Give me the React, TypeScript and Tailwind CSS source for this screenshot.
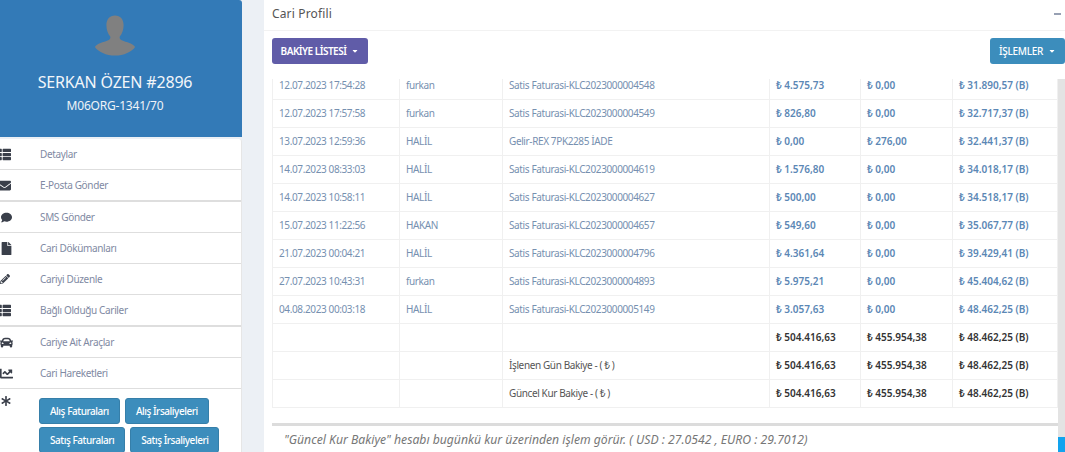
import { FaThList, FaEnvelope, FaComment, FaFile, FaPencilAlt, FaCar, FaChartLine, FaAsterisk, FaCaretDown } from 'react-icons/fa';
import type { ReactNode } from 'react';

const menu: { icon: ReactNode; label: string; thick?: boolean }[] = [
  { icon: <FaThList size={13} className="-ml-[2px]" />, label: 'Detaylar' },
  { icon: <FaEnvelope size={13} className="-ml-[2px]" />, label: 'E-Posta Gönder', thick: true },
  { icon: <FaComment size={11} className="ml-[1px]" />, label: 'SMS Gönder' },
  { icon: <FaFile size={13} />, label: 'Cari Dökümanları' },
  { icon: <FaPencilAlt size={10} />, label: 'Cariyi Düzenle' },
  { icon: <FaThList size={13} className="-ml-[2px]" />, label: 'Bağlı Olduğu Cariler', thick: true },
  { icon: <FaCar size={13} />, label: 'Cariye Ait Araçlar' },
  { icon: <FaChartLine size={13} />, label: 'Cari Hareketleri' },
];

const rows = [
  ['12.07.2023 17:54:28', 'furkan', 'Satis Faturasi-KLC2023000004548', '₺ 4.575,73', '₺ 0,00', '₺ 31.890,57 (B)'],
  ['12.07.2023 17:57:58', 'furkan', 'Satis Faturasi-KLC2023000004549', '₺ 826,80', '₺ 0,00', '₺ 32.717,37 (B)'],
  ['13.07.2023 12:59:36', 'HALİL', 'Gelir-REX 7PK2285 İADE', '₺ 0,00', '₺ 276,00', '₺ 32.441,37 (B)'],
  ['14.07.2023 08:33:03', 'HALİL', 'Satis Faturasi-KLC2023000004619', '₺ 1.576,80', '₺ 0,00', '₺ 34.018,17 (B)'],
  ['14.07.2023 10:58:11', 'HALİL', 'Satis Faturasi-KLC2023000004627', '₺ 500,00', '₺ 0,00', '₺ 34.518,17 (B)'],
  ['15.07.2023 11:22:56', 'HAKAN', 'Satis Faturasi-KLC2023000004657', '₺ 549,60', '₺ 0,00', '₺ 35.067,77 (B)'],
  ['21.07.2023 00:04:21', 'HALİL', 'Satis Faturasi-KLC2023000004796', '₺ 4.361,64', '₺ 0,00', '₺ 39.429,41 (B)'],
  ['27.07.2023 10:43:31', 'furkan', 'Satis Faturasi-KLC2023000004893', '₺ 5.975,21', '₺ 0,00', '₺ 45.404,62 (B)'],
  ['04.08.2023 00:03:18', 'HALİL', 'Satis Faturasi-KLC2023000005149', '₺ 3.057,63', '₺ 0,00', '₺ 48.462,25 (B)'],
];

const totals = ['', 'İşlenen Gün Bakiye - ( ₺ )', 'Güncel Kur Bakiye - ( ₺ )'];

const td = 'h-7 border border-[#f0f0f0] px-[6px] py-0 align-middle';
const plain = `${td} tracking-[-0.38px]`;

function Btn({ children }: { children: ReactNode }) {
  return (
    <button className="h-[26px] rounded-[3px] bg-[#3c8dbc] border border-[#367fa9] px-[10px] text-[10px] font-medium tracking-[-0.45px] text-white whitespace-nowrap">
      {children}
    </button>
  );
}

export default function App() {
  return (
    <div className="flex h-[452px] w-[1065px] overflow-hidden bg-[#ecf0f5] font-['Noto_Sans','Open_Sans',sans-serif]">
      {/* Profile column */}
      <div className="w-[242px] shrink-0">
        <div className="h-[137px] bg-[#337ab7] rounded-tr-[3px] flex flex-col items-center pr-[12px] text-white">
          <svg viewBox="0 0 44 44" className="w-[42px] h-[43px] mt-[14px] text-[#808080]" fill="currentColor">
            <path d="M22 1c5.500 0 9 4 9 10 0 5-1.500 9-4 12-.500 1.500 0 3 2 4 5 2 12 3.500 14 7-3 5-12 9-21 9S4 39 1 34c2-3.500 9-5 14-7 2-1 2.500-2.500 2-4-2.500-3-4-7-4-12 0-6 3.500-10 9-10z" />
          </svg>
          <div className="mt-[13px] text-[16px] leading-[24px] tracking-[-0.18px] text-[#f2f6fa]">SERKAN ÖZEN #2896</div>
          <div className="text-[12px] leading-[24px] tracking-[-0.2px] text-[#eef3f8]">M06ORG-1341/70</div>
        </div>
        <div className="mt-[2px] bg-white rounded-tr-[3px] h-[313px] border-r border-[#e6e6e6]">
          {menu.map((m) => (
            <div
              key={m.label}
              className={`flex items-center text-[#3a3f4a] border-[#dedede] ${m.thick ? 'h-[32px] border-b-2' : 'h-[31px] border-b'}`}
            >
              <span className="w-[40px] shrink-0 flex items-center">{m.icon}</span>
              <span className="text-[10px] tracking-[-0.35px] text-[#7f8aa3]">{m.label}</span>
            </div>
          ))}
          <div className="flex pt-[9px]">
            <span className="w-[39px] shrink-0 pl-[1px] -mt-[2px] text-[#3a3f4a]">
              <FaAsterisk size={10} />
            </span>
            <div className="flex flex-col gap-[3px]">
              <div className="flex gap-[5px]">
                <Btn>Alış Faturaları</Btn>
                <Btn>Alış İrsaliyeleri</Btn>
              </div>
              <div className="flex gap-[5px]">
                <Btn>Satış Faturaları</Btn>
                <Btn>Satış İrsaliyeleri</Btn>
              </div>
            </div>
          </div>
        </div>
      </div>

      {/* Main panel */}
      <div className="ml-[22px] flex-1 min-w-0 bg-white flex flex-col">
        <div className="h-[31px] shrink-0 border-b border-[#f2f2f2] flex items-center justify-between pl-[8px] pb-[2px]">
          <span className="text-[12px] text-[#555] tracking-[0.15px]">Cari Profili</span>
          <span className="w-[7px] h-[2px] bg-[#97a0b3] mr-[4px]"></span>
        </div>
        <div className="h-[48px] shrink-0 flex items-start justify-between pl-[8px] pt-[7px]">
          <button className="h-[26px] w-[96px] rounded-[3px] bg-[#605ca8] text-white text-[10px] font-semibold tracking-[-0.5px] flex items-center justify-center gap-[5px]">
            BAKİYE LİSTESİ <FaCaretDown size={8} />
          </button>
          <button className="h-[26px] w-[75px] rounded-[3px] bg-[#3c8dbc] text-white text-[10px] font-medium tracking-[-0.3px] flex items-center justify-center gap-[5px]">
            İŞLEMLER <FaCaretDown size={8} />
          </button>
        </div>
        <div className="flex flex-1 min-h-0">
          <div className="flex-1 min-w-0 flex flex-col overflow-hidden pl-[8px]">
            <div className="h-[347px] shrink-0 overflow-hidden border-b-[3px] border-[#dcdcdc]">
              <table className="-mt-[8px] w-[785px] table-fixed border-collapse text-[10px]">
                <colgroup>
                  <col className="w-[127px]" />
                  <col className="w-[103px]" />
                  <col className="w-[267px]" />
                  <col className="w-[91px]" />
                  <col className="w-[92px]" />
                  <col className="w-[105px]" />
                </colgroup>
                <tbody>
                  {rows.map((r) => (
                    <tr key={r[0]} className="text-[#7690b0]">
                      <td className={plain}>{r[0]}</td>
                      <td className={plain}>{r[1]}</td>
                      <td className={plain}>{r[2]}</td>
                      <td className={`${td} font-semibold text-[#5b87b5]`}>{r[3]}</td>
                      <td className={`${td} font-semibold text-[#5b87b5]`}>{r[4]}</td>
                      <td className={`${td} font-semibold text-[#5b87b5]`}>{r[5]}</td>
                    </tr>
                  ))}
                  {totals.map((t) => (
                    <tr key={t} className="text-[#555]">
                      <td className={td}></td>
                      <td className={td}></td>
                      <td className={plain}>{t}</td>
                      <td className={`${td} font-semibold text-[#333]`}>₺ 504.416,63</td>
                      <td className={`${td} font-semibold text-[#333]`}>₺ 455.954,38</td>
                      <td className={`${td} font-semibold text-[#333]`}>₺ 48.462,25 (B)</td>
                    </tr>
                  ))}
                </tbody>
              </table>
            </div>
            <div className="pl-[12px] pt-[5px] text-[12.2px] italic text-[#777] whitespace-nowrap">
              "Güncel Kur Bakiye" hesabı bugünkü kur üzerinden işlem görür. ( USD : 27.0542 , EURO : 29.7012)
            </div>
          </div>
          <div className="w-[7px] shrink-0 flex flex-col bg-[#e3e3e3]">
            <div className="flex-1"></div>
            <div className="h-[15px] bg-[#12a3ee]"></div>
          </div>
        </div>
      </div>
    </div>
  );
}
